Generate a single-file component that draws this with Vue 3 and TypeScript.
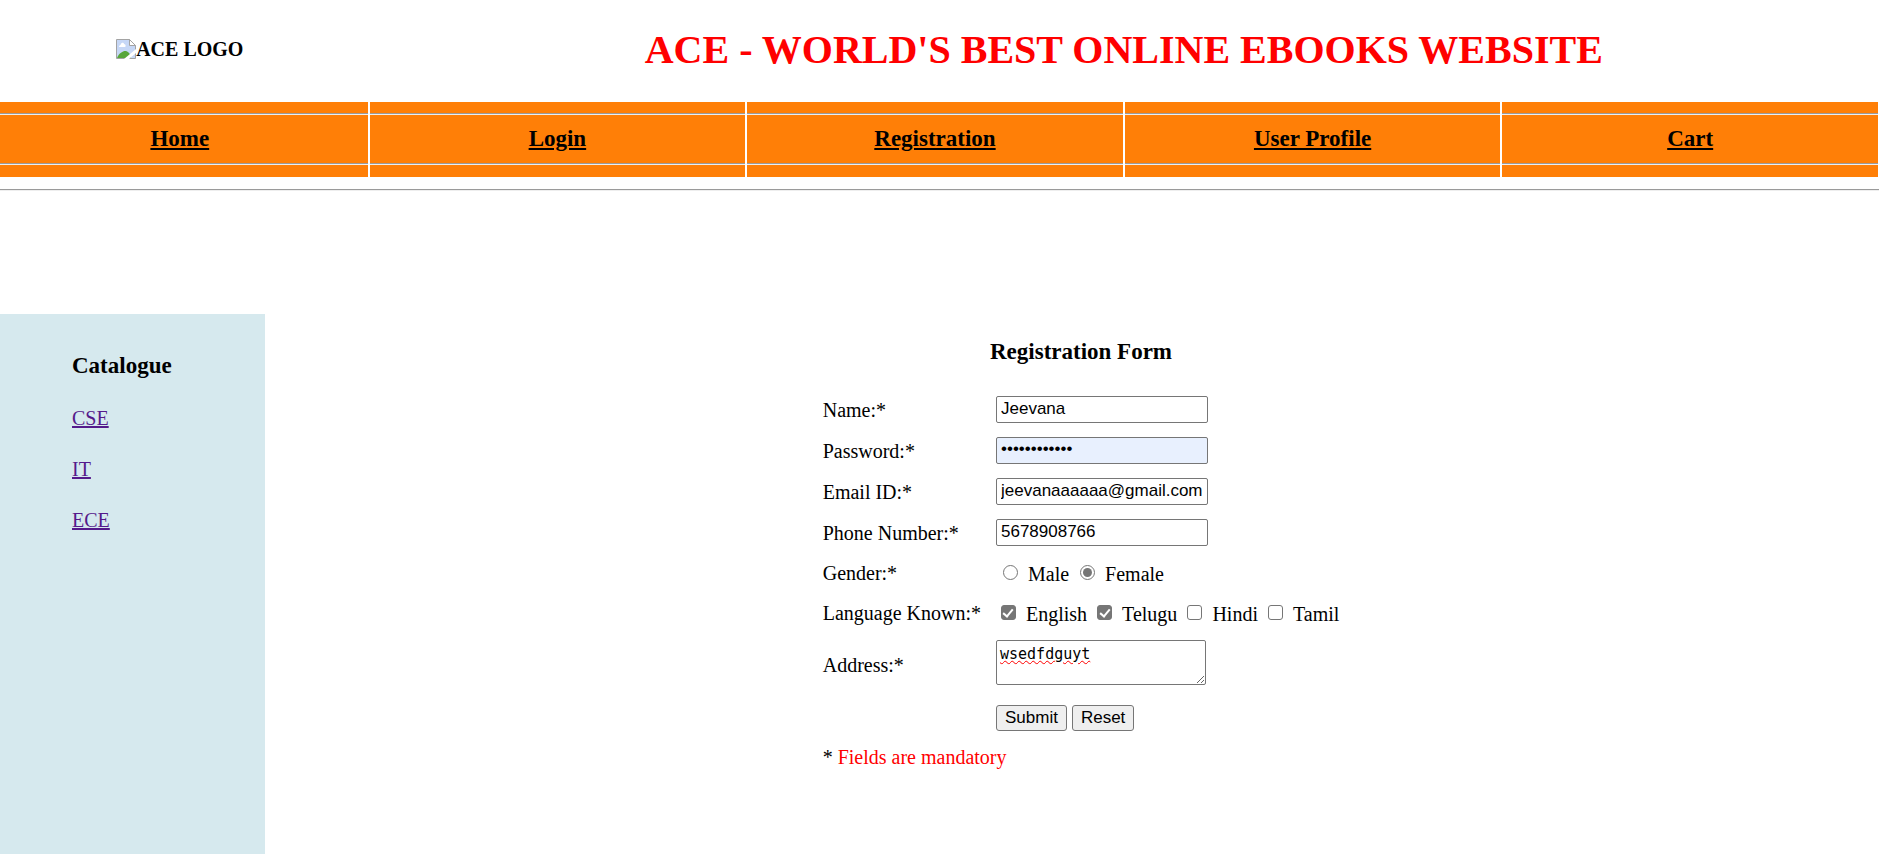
<script setup lang="ts">
import { reactive } from 'vue'

interface TextField {
  id: 'name' | 'password' | 'email' | 'phone'
  label: string
  type: string
}

const navItems: string[] = ['Home', 'Login', 'Registration', 'User Profile', 'Cart']
const catalogue: string[] = ['CSE', 'IT', 'ECE']
const textFields: TextField[] = [
  { id: 'name', label: 'Name:*', type: 'text' },
  { id: 'password', label: 'Password:*', type: 'password' },
  { id: 'email', label: 'Email ID:*', type: 'text' },
  { id: 'phone', label: 'Phone Number:*', type: 'text' },
]
const genders: string[] = ['Male', 'Female']
const languages: string[] = ['English', 'Telugu', 'Hindi', 'Tamil']

const blank = () => ({
  name: '',
  password: '',
  email: '',
  phone: '',
  gender: '',
  languages: [] as string[],
  address: '',
})

const form = reactive({
  name: 'Jeevana',
  password: 'jeevana12345',
  email: 'jeevanaaaaaa@gmail.com',
  phone: '5678908766',
  gender: 'Female',
  languages: ['English', 'Telugu'],
  address: 'wsedfdguyt',
})

function reset(): void {
  Object.assign(form, blank())
}
</script>

<template>
  <div class="page">
    <header class="banner">
      <div class="logo">
        <svg class="logo-icon" viewBox="0 0 20 20" aria-hidden="true">
          <path d="M.5 .5H13.500L19.500 6.500V19.500H.5Z" fill="#c6d7f6" stroke="#a3a3a3" />
          <path d="M3 8C3 6 5 6 5 5C6 3 8 4 8 5C10 5 10 8 9 8Z" fill="#fff" />
          <path d="M1 19C3 14 7 12 9 12C12 12 14 14 15 19Z" fill="#58a63b" />
          <path d="M13.500 .5V6.500H19.500Z" fill="#fff" stroke="#a3a3a3" />
          <path d="M8 20L20 10V14L13 20Z" fill="#fff" />
        </svg>
        <span>ACE LOGO</span>
      </div>
      <h1 class="title">ACE - WORLD'S BEST ONLINE EBOOKS WEBSITE</h1>
    </header>

    <nav class="nav">
      <div v-for="item in navItems" :key="item" class="nav-cell">
        <hr class="rule" />
        <a class="nav-link" href="#">{{ item }}</a>
        <hr class="rule" />
      </div>
    </nav>
    <hr class="rule page-rule" />

    <div class="body">
      <aside class="sidebar">
        <h3 class="heading">Catalogue</h3>
        <a v-for="item in catalogue" :key="item" class="cat-link" href="#">{{ item }}</a>
      </aside>

      <main class="content">
        <form class="form" @submit.prevent>
          <h3 class="heading form-heading">Registration Form</h3>
          <div class="fields">
            <template v-for="field in textFields" :key="field.id">
              <label :for="field.id">{{ field.label }}</label>
              <input
                :id="field.id"
                v-model="form[field.id]"
                class="text-input"
                :class="{ filled: field.type === 'password' }"
                :type="field.type"
              />
            </template>

            <span id="gender-label">Gender:*</span>
            <div class="options radios" role="radiogroup" aria-labelledby="gender-label">
              <label v-for="g in genders" :key="g" class="option">
                <input v-model="form.gender" class="radio" type="radio" name="gender" :value="g" />
                <span>{{ g }}</span>
              </label>
            </div>

            <span id="language-label">Language Known:*</span>
            <div class="options" role="group" aria-labelledby="language-label">
              <label v-for="l in languages" :key="l" class="option">
                <input v-model="form.languages" class="check" type="checkbox" :value="l" />
                <span>{{ l }}</span>
              </label>
            </div>

            <label class="address-label" for="address">Address:*</label>
            <textarea id="address" v-model="form.address" class="address" rows="2"></textarea>

            <div class="actions">
              <button class="btn" type="submit">Submit</button>
              <button class="btn" type="button" @click="reset">Reset</button>
            </div>
          </div>
          <p class="note">* <span class="note-text">Fields are mandatory</span></p>
        </form>
      </main>
    </div>
  </div>
</template>

<style>
body {
  margin: 0;
  background: #fff;
}
</style>

<style scoped>
.page {
  display: flex;
  flex-direction: column;
  min-height: 100vh;
  overflow: hidden;
  color: #000;
  font-family: "Liberation Serif", "Times New Roman", serif;
  font-size: 20px;
  line-height: 24px;
}

.banner,
.nav {
  display: grid;
  grid-template-columns: repeat(5, 1fr);
  column-gap: 2px;
  margin: 0 4px 0 -8px;
}

.banner {
  align-items: center;
  padding: 26px 0 28px;
}

.logo {
  display: flex;
  justify-content: center;
  align-items: center;
  padding-bottom: 2px;
  font-weight: bold;
}

.logo-icon {
  width: 20px;
  height: 20px;
}

.title {
  grid-column: 2 / -1;
  margin: 0;
  color: #f00;
  font-size: 40px;
  line-height: 48px;
  text-align: center;
}

.nav-cell {
  display: flex;
  flex-direction: column;
  padding: 11px 0 12px;
  background: #ff7f07;
}

.rule {
  box-sizing: border-box;
  height: 2px;
  margin: 0;
  border: 0;
  border-top: 1px solid #9a9a9a;
  border-bottom: 1px solid #eee;
}

.nav-link {
  padding: 12px 0;
  color: #000;
  font-size: 23px;
  font-weight: bold;
  line-height: 24px;
  text-align: center;
}

.page-rule {
  margin: 12px 3px 0 0;
}

.body {
  display: flex;
  flex: 1;
  margin-top: 123px;
}

.sidebar {
  box-sizing: border-box;
  display: flex;
  flex-direction: column;
  align-items: flex-start;
  width: 265px;
  padding: 38px 72px;
  background: #d6e9ee;
}

.heading {
  margin: 0;
  font-size: 23px;
  line-height: 28px;
}

.cat-link {
  margin-top: 27px;
  color: #551a8b;
}

.cat-link:first-of-type {
  margin-top: 26px;
}

.content {
  display: flex;
  flex: 1;
  justify-content: center;
  padding: 24px 0 0 15px;
}

.form-heading {
  text-align: center;
}

.fields {
  display: grid;
  grid-template-columns: auto auto;
  grid-template-rows: repeat(4, 41px) 40px 40px 60px 50px;
  column-gap: 15px;
  align-items: center;
  justify-items: start;
  margin-top: 23px;
}

.text-input,
.address {
  box-sizing: border-box;
  width: 212px;
  height: 27px;
  margin: 0;
  padding: 2px 4px 3px;
  border: 1px solid #767676;
  border-radius: 2px;
  background: #fff;
  color: #000;
  font-family: "Liberation Sans", Arial, sans-serif;
  font-size: 17px;
  line-height: 20px;
}

.text-input.filled {
  padding: 1px 4px 4px;
  background: #e8f0fe;
}

.address {
  width: 210px;
  height: 45px;
  margin-bottom: 2px;
  padding: 3px;
  font-family: "DejaVu Sans Mono", Consolas, monospace;
  font-size: 15px;
  text-decoration: underline wavy #f00 1px;
}

.address-label {
  padding-top: 4px;
}

.options {
  display: flex;
  gap: 10px;
  padding: 2px 0 0 5px;
}

.radios {
  gap: 11px;
  padding-left: 7px;
}

.option {
  display: flex;
  align-items: center;
  gap: 10px;
}

.radio,
.check {
  box-sizing: border-box;
  display: grid;
  place-content: center;
  width: 15px;
  height: 15px;
  margin: 0 0 3px;
  border: 1px solid #767676;
  border-radius: 3px;
  appearance: none;
  background: #fff;
}

.radio {
  border-radius: 50%;
}

.radio:checked::before {
  width: 9px;
  height: 9px;
  border-radius: 50%;
  background: #767676;
  content: "";
}

.check:checked {
  background: #767676;
}

.check:checked::before {
  width: 4px;
  height: 8px;
  margin-bottom: 2px;
  border: solid #fff;
  border-width: 0 2px 2px 0;
  transform: rotate(40deg);
  content: "";
}

.actions {
  display: flex;
  grid-column: 2;
  gap: 5px;
}

.btn {
  box-sizing: border-box;
  height: 26px;
  padding: 0 8px;
  border: 1px solid #767676;
  border-radius: 3px;
  background: #efefef;
  color: #000;
  font-family: "Liberation Sans", Arial, sans-serif;
  font-size: 17px;
  line-height: 22px;
}

.note {
  margin: 2px 0 0;
}

.note-text {
  color: #f00;
}
</style>
